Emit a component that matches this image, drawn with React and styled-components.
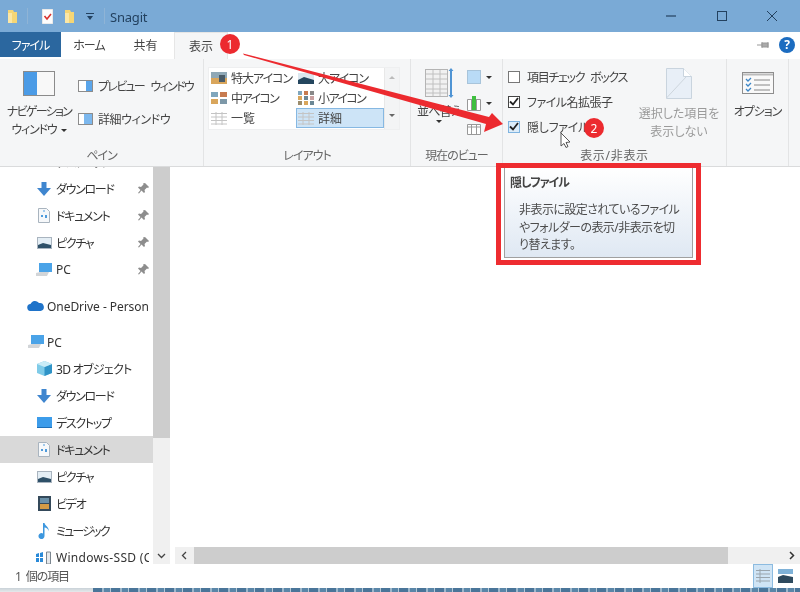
import React from "react";
import styled, { createGlobalStyle } from "styled-components";

const Global = createGlobalStyle`
  html, body { margin: 0; padding: 0; background: #fff; }
  body { font-family: "Noto Sans", "Noto Sans CJK JP", sans-serif; font-size: 12px; font-feature-settings: "palt"; color: #333; }
  * { box-sizing: border-box; }
`;

const Windowed = styled.div`
  position: relative; width: 800px; height: 592px; overflow: hidden;
  display: flex; flex-direction: column; background: #fff; filter: blur(0.3px);
`;
const Kana = styled.span`
  letter-spacing: ${p => p.$ls ?? -1}px;
  word-spacing: ${p => p.$ws || 0}px;
`;
const TitleBar = styled.header`
  height: 32px; flex: none; background: #7aaad6; display: flex; align-items: center; padding-left: 8px; color: #23415f;
`;
const QuickSep = styled.i`
  width: 1px; height: 16px; background: #8fb4d6; margin: 0 ${p => p.$r}px 0 ${p => p.$l}px;
`;
const QuickSpace = styled.i`
  width: ${p => p.$w}px; flex: none;
`;
const TitleText = styled.span`
  font-size: 13px; margin-right: auto; letter-spacing: -0.2px; padding-top: 1px;
`;
const WinButtons = styled.div`
  display: flex; width: 111px; justify-content: space-between; margin-right: 23px; align-items: center;
`;
const TabRow = styled.nav`
  height: 27px; flex: none; display: flex; align-items: stretch; background: #fff; color: #444; padding-bottom: 2px;
`;
const FileTab = styled.div`
  width: 61px; background: #2b679f; color: #fff; display: flex; align-items: center; justify-content: center;
`;
const Tab = styled.div`
  width: ${p => p.$w}px; display: flex; align-items: center; justify-content: center;
  ${p => p.$active && "background:#f5f6f7;border:1px solid #e6e6e6;border-bottom:0;margin-bottom:-2px;"}
`;
const TabTools = styled.div`
  margin-left: auto; display: flex; align-items: center; gap: 9px; padding-right: 5px;
`;
const Help = styled.span`
  width: 16px; height: 16px; border-radius: 50%; background: #1c6cc0; color: #fff; font-weight: 700; font-size: 12px;
  display: flex; align-items: center; justify-content: center;
`;
const Ribbon = styled.section`
  height: 108px; flex: none; display: flex; background: #f5f6f7; border-bottom: 1px solid #dadbdc; color: #444;
`;
const Group = styled.div`
  width: ${p => p.$w}px; flex: none; display: flex; flex-direction: column; border-right: 1px solid #e3e4e5;
`;
const GroupBody = styled.div`
  height: 86px; flex: none; display: flex;
`;
const GroupLabel = styled.div`
  height: 20px; text-align: center; line-height: 20px; color: #666; padding-top: 1px;
`;
const BigButton = styled.div`
  display: flex; flex-direction: column; align-items: center; line-height: 18px; text-align: center; white-space: nowrap;
  width: ${p => p.$w}px; flex: none;
  padding-top: ${p => p.$pt || 12}px;
`;
const BigCaption = styled.div`
  margin-top: ${p => p.$mt || 7}px;
  color: ${p => (p.$muted ? "#9a9a9a" : "inherit")};
`;
const CaptionLine = styled.div`
  display: flex; align-items: center; justify-content: center; gap: 4px;
`;
const PaneList = styled.div`
  display: flex; flex-direction: column; gap: 13px; padding-top: 17px;
`;
const PaneItem = styled.div`
  display: flex; align-items: center; gap: 5px; height: 20px; white-space: nowrap;
`;
const Gallery = styled.div`
  margin: 8px 0 0 4px; width: 192px; height: 63px; background: #fff; display: flex; border: 1px solid #eeeff0;
`;
const GalleryGrid = styled.div`
  width: 175px; display: grid; grid-template-columns: 87px 88px; grid-auto-rows: 20px;
`;
const GalleryItem = styled.div`
  display: flex; align-items: center; gap: 4px; padding-left: 2px; white-space: nowrap;
  ${p => p.$sel && "background:#cde4f7;outline:1px solid #86b8e2;outline-offset:-1px;"}
`;
const GalleryScroll = styled.div`
  width: 15px; margin-left: auto; background: #f3f4f5; border-left: 1px solid #e8e8e8;
  display: flex; flex-direction: column; align-items: center; justify-content: space-between; padding: 8px 0 12px; color: #aaa;
`;
const SortColumn = styled.div`
  width: 56px; display: flex; flex-direction: column; align-items: center; padding-top: 9px;
  line-height: 16px; white-space: nowrap; flex: none;
`;
const SmallColumn = styled.div`
  display: flex; flex-direction: column; gap: 6px; padding-top: 8px;
`;
const SmallTool = styled.div`
  display: flex; align-items: center; gap: 5px; height: 20px;
`;
const Caret = styled.i`
  width: 0; height: 0; border: 3px solid transparent; border-top: 3px solid ${p => p.$c || "#333"}; border-bottom: 0; display: block;
`;
const CheckColumn = styled.div`
  width: 132px; padding: 5px 0 0 5px; flex: none;
`;
const CheckRow = styled.label`
  display: flex; align-items: center; gap: 7px; height: 25px; white-space: nowrap;
`;
const Box = styled.span`
  width: 12px; height: 12px; flex: none; display: flex; align-items: center; justify-content: center;
  background: ${p => (p.$hover ? "#dcecf9" : "#fff")};
  border: 1px solid ${p => (p.$hover ? "#7fb4e0" : p.$on ? "#444" : "#777")};
`;
const Body = styled.main`
  height: 397px; flex: none; display: flex; overflow: hidden;
`;
const Nav = styled.div`
  width: 153px; flex: none; overflow: hidden;
`;
const NavList = styled.ul`
  list-style: none; margin: -19px 0 0; padding: 0;
`;
const NavRow = styled.li`
  height: 27px; display: flex; align-items: center; white-space: nowrap; overflow: hidden;
  color: #333; padding-right: 4px;
  padding-left: ${p => (p.$top ? 27 : 37)}px;
  margin-top: ${p => (p.$top ? 9 : 0)}px;
  background: ${p => (p.$sel ? "#d9d9d9" : "transparent")};
  gap: ${p => (p.$top ? 3 : 5)}px;
`;
const NavIcon = styled.span`
  width: ${p => (p.$top ? 17 : 14)}px; flex: none; display: flex; justify-content: center;
`;
const NavText = styled.span`
  flex: 1; overflow: hidden; letter-spacing: ${p => p.$ls ?? -1.3}px;
  ${p => p.$latin && "padding-top:1px;"}
`;
const VScroll = styled.div`
  width: 17px; flex: none; background: #f0f0f0; display: flex; flex-direction: column; height: 397px;
`;
const VThumb = styled.div`
  height: 271px; background: #cdcdcd;
`;
const ScrollBtn = styled.div`
  width: 17px; height: 17px; flex: none; display: flex; align-items: center; justify-content: center;
  margin-top: ${p => (p.$end ? "auto" : 0)};
`;
const Content = styled.div`
  flex: 1; display: flex; flex-direction: column; justify-content: flex-end; padding-left: 5px;
`;
const HScroll = styled.div`
  height: 17px; display: flex; background: #f0f0f0;
`;
const HThumb = styled.div`
  width: 534px; background: #cdcdcd; margin-left: 2px;
`;
const HEnd = styled.div`
  margin-left: auto;
`;
const StatusBar = styled.footer`
  height: 24px; flex: none; display: flex; align-items: center; padding: 0 7px 0 15px; color: #555;
`;
const ViewToggle = styled.div`
  margin-left: auto; display: flex; align-items: center; gap: 4px;
`;
const ViewBtn = styled.div`
  width: ${p => (p.$on ? 20 : 16)}px; height: 24px; display: flex; align-items: center; justify-content: center;
  ${p => p.$on && "background:#cfe4f5;border:1px solid #8cbbe0;"}
`;
const BottomEdge = styled.div`
  height: 4px; flex: none; display: flex;
`;
const EdgeLeft = styled.div`
  width: 93px; background: linear-gradient(#c9d2d8, #e6e9eb);
`;
const EdgeRight = styled.div`
  flex: 1; background: repeating-linear-gradient(90deg, #4a7599 0 9px, #9db7cb 9px 11px, #5a86a8 11px 17px, #b5c8d6 17px 18px);
`;
const Overlay = styled.svg`
  position: absolute; left: 0; top: 0; width: 800px; height: 592px; pointer-events: none;
`;
const Badge = styled.span`
  position: absolute; left: ${p => p.$x - 10}px; top: ${p => p.$y - 10}px; width: 20px; height: 20px; border-radius: 50%;
  background: #ec2a2f; color: #fff; font-size: 12px; display: flex; align-items: center; justify-content: center;
`;
const TipFrame = styled.aside`
  position: absolute; left: 496px; top: 163px; width: 205px; height: 102px; border: 5px solid #ee2c30;
  background: #fff; padding: 0 3px 0 3px;
`;
const TipPanel = styled.div`
  height: 90px; border: 1px solid #a0a0a0; border-top: 0;
  background: linear-gradient(#ffffff, #dfe8f3); color: #4c4c4c; padding: 5px 0 0 5px; white-space: nowrap;
`;
const TipTitle = styled.div`
  font-weight: 700; line-height: 20px; color: #444; letter-spacing: -1.1px;
`;
const TipText = styled.div`
  line-height: 17.5px; margin: 8px 0 0 9px; letter-spacing: -0.55px;
`;

const svg = (w, h, c) => <svg width={w} height={h} viewBox={`0 0 ${w} ${h}`} style={{ display: "block", flex: "none" }}>{c}</svg>;

const FolderQ = () => svg(10, 14, <><path d="M0 1h5l1 2h3v11H0z" fill="#f6d675" /><path d="M0 4h4v10H0z" fill="#fbe7a6" /></>);
const NoteQ = () => svg(11, 15, <><path d="M0 0h11v15H0z" fill="#fdfdfd" stroke="#d8d8d8" /><path d="M2.500 7l2.500 3 4-5" fill="none" stroke="#d9322f" strokeWidth="1.6" /></>);
const DropQ = () => svg(8, 7, <><path d="M0 0h8v1H0z" fill="#23415f" /><path d="M1 3h6L4 7z" fill="#23415f" /></>);
const MinI = () => svg(10, 10, <path d="M0 5h10" stroke="#23415f" strokeWidth="1.2" />);
const MaxI = () => svg(10, 10, <rect x=".5" y=".5" width="9" height="9" fill="none" stroke="#23415f" />);
const CloseI = () => svg(10, 10, <path d="M0 0l10 10M10 0L0 10" stroke="#23415f" />);
const PinH = () => svg(13, 8, <path d="M0 4h5M5 1v6M5 2h6v4H5zM11 1v6" stroke="#999" fill="#aaa" />);
const NavPane = () => svg(32, 25, <><rect x=".5" y=".5" width="31" height="24" fill="#f8f8f8" stroke="#8b8b8b" /><rect x="1" y="1" width="13" height="23" fill="#4b9be6" /></>);
const PaneIcon = ({ right }) => svg(15, 12, <><rect x=".5" y=".5" width="14" height="11" fill="#fff" stroke="#8c8c8c" />{right ? <rect x="8" y="1" width="6" height="10" fill="#5aa5ea" /> : <rect x="6" y="1" width="8" height="10" fill="#7cb8ee" />}</>);
const Thumb = ({ kind }) => {
  if (kind === "xl") return svg(16, 12, <><rect width="16" height="12" fill="#8fa8b6" /><path d="M0 6h16v6H0z" fill="#d9a65c" /><path d="M8 3h6v7H8z" fill="#4a5c68" /></>);
  if (kind === "l") return svg(16, 11, <><rect width="16" height="11" fill="#dbe7ef" /><path d="M0 7l6-3 10 3v4H0z" fill="#24465e" /></>);
  if (kind === "m") return svg(16, 12, <><rect width="7" height="5" fill="#7fa6bd" /><rect x="9" width="7" height="5" fill="#c77b50" /><rect y="7" width="7" height="5" fill="#d9a65c" /><rect x="9" y="7" width="7" height="5" fill="#7d98a8" /></>);
  if (kind === "s") return svg(16, 14, <><rect width="4" height="4" fill="#7fa6bd" /><rect x="6" width="4" height="4" fill="#c77b50" /><rect x="12" width="4" height="4" fill="#888" /><rect y="5" width="4" height="4" fill="#d9a65c" /><rect x="6" y="5" width="4" height="4" fill="#6b8795" /><rect x="12" y="5" width="4" height="4" fill="#c9a0a0" /><rect y="10" width="4" height="4" fill="#9b8c6c" /><rect x="6" y="10" width="4" height="4" fill="#d9a65c" /><rect x="12" y="10" width="4" height="4" fill="#6b8795" /></>);
  return svg(16, 13, <path d="M0 1.500h16M0 5h16M0 8.500h16M0 12h16M5 0v13M11 0v13" stroke="#c4c4c4" fill="none" />);
};
const SortBig = () => svg(29, 30, <>
  <rect x=".5" y="1.500" width="22" height="27" fill="#f1f1f1" stroke="#b4b4b4" />
  <path d="M1 6h21M1 11h21M1 16h21M1 21h21M1 25h21M8 2v26M15 2v26" stroke="#c0c0c0" />
  <path d="M26 0l2.500 3h-1.500v24h1.500L26 30l-2.500-3H25V3h-1.500z" fill="#4f94d4" />
</>);
const Preview = () => svg(14, 14, <><rect x=".5" y=".5" width="13" height="13" fill="#b9dbf6" stroke="#a8c4da" /></>);
const Cols = () => svg(14, 15, <><path d="M.5 3.500h13v11H.5z" fill="#fff" stroke="#999" /><path d="M4.500 4v10M9.500 4v10" stroke="#999" /><rect x="5" y="0" width="4" height="14" fill="#3fbf3f" /></>);
const ColsPlain = () => svg(14, 11, <><path d="M.5 .5h13v10H.5z" fill="#fff" stroke="#999" /><path d="M4.500 1v9M9.500 1v9M1 3h12" stroke="#999" /></>);
const Check = () => svg(10, 9, <path d="M1 4.500l3 3L9 1" fill="none" stroke="#222" strokeWidth="1.800" />);
const HideDoc = () => svg(26, 31, <><path d="M.5 .5h17l8 8v22H.5z" fill="#e8eff7" stroke="#c9d4de" /><path d="M17.500 .5v8h8" fill="#fff" stroke="#c9d4de" /><path d="M.5 30L20 9" stroke="#cdd5dc" /></>);
const OptionsI = () => svg(32, 22, <>
  <rect x=".5" y=".5" width="31" height="21" fill="#f9f9f9" stroke="#8e8e8e" /><path d="M1 2.500h30" stroke="#bbb" strokeWidth="2" />
  <path d="M4 7l2 2 3-3M4 12l2 2 3-3M4 17l2 2 3-3" fill="none" stroke="#3d86c6" strokeWidth="1.300" />
  <path d="M12 8h16M12 13h16M12 18h16" stroke="#888" />
</>);
const Down = () => svg(14, 14, <path d="M4.500 0h5v6H14l-7 8-7-8h4.500z" fill="#3f86cf" />);
const Doc = () => svg(12, 15, <><path d="M.5 .5h8l3 3v11H.5z" fill="#f6f8fa" stroke="#a9b4bf" /><path d="M3 7h2v2H3zM7 7h2v3H7z" fill="#4f9bdc" /><path d="M5 3h2" stroke="#4f9bdc" /></>);
const Pic = () => svg(15, 12, <><rect x=".5" y=".5" width="14" height="11" fill="#e4eef5" stroke="#a9b4bf" /><path d="M1 8l5-2 8 2v3H1z" fill="#2e5068" /></>);
const PC = () => svg(16, 14, <><path d="M3 0h13v9H3z" fill="#4aa3e8" /><path d="M0 10l4-1h9l-2 4H0z" fill="#d2d5d8" /></>);
const Cloud = () => svg(17, 11, <path d="M4 11a3.500 3.500 0 0 1-.5-7A5 5 0 0 1 12 3a4 4 0 0 1 1.500 8z" fill="#1f73c9" />);
const Cube = () => svg(15, 15, <><path d="M7.500 0L15 3v9l-7.500 3L0 12V3z" fill="#7fcbe8" /><path d="M7.500 6L15 3v9l-7.500 3z" fill="#2f93c7" /><path d="M7.500 6L0 3l7.500-3L15 3z" fill="#c9ecf7" /></>);
const Desk = () => svg(15, 11, <><rect width="15" height="10" fill="#3c9cea" /><rect y="10" width="15" height="1" fill="#1d6fb8" /></>);
const Video = () => svg(13, 15, <><rect width="13" height="15" fill="#34495a" /><rect x="2" y="2" width="9" height="5" fill="#6a90a8" /><rect x="2" y="8" width="9" height="5" fill="#d49b45" /></>);
const Note = () => svg(12, 16, <path d="M5 0h1.500c.5 3 5 4 4 8-.5-2-2-3.500-4-3.500V13a3 3 0 1 1-1.500-2.500z" fill="#3d97de" />);
const Disk = () => svg(17, 14, <><path d="M0 3l3-1v4H0zM4 2l3-1v5H4zM0 7h3v4H0zM4 7h3v4H4z" fill="#2a8ad8" /><path d="M10.500 1h4v12h-4z" fill="#e6e9ec" stroke="#7c8790" /></>);
const Pin = () => svg(11, 11, <path d="M7 0l4 4-1 1-1-.500L6.500 7l.5 2-1 1-2.500-2.500L1 10.500 0 10l2.500-3L0 4.500l1-1 2 .5L5.500 1.500 5 .5z" fill="#8d8d8d" />);
const ChevD = () => svg(9, 6, <path d="M1 1l3.500 3.500L8 1" fill="none" stroke="#444" strokeWidth="1.300" />);
const ChevL = () => svg(6, 9, <path d="M5 1L1.500 4.500 5 8" fill="none" stroke="#444" strokeWidth="1.300" />);
const ChevR = () => svg(6, 9, <path d="M1 1l3.500 3.500L1 8" fill="none" stroke="#333" strokeWidth="1.500" />);
const DetailsV = () => svg(14, 14, <path d="M0 1.500h14M0 5h14M0 8.500h14M0 12h14M4 0v14" stroke="#9aa5ad" fill="none" />);
const LargeV = () => svg(15, 14, <><rect width="15" height="5" fill="#7fb2d8" /><path d="M0 8l5-2 10 2v6H0z" fill="#2e4a5e" /></>);

const navRows = [
  [<Desk />, "デスクトップ"],
  [<Down />, "ダウンロード"],
  [<Doc />, "ドキュメント"],
  [<Pic />, "ピクチャ"],
  [<PC />, "PC", 0],
];
const navRows2 = [
  [<Cube />, "3D オブジェクト", -0.7],
  [<Down />, "ダウンロード"],
  [<Desk />, "デスクトップ"],
  [<Doc />, "ドキュメント", -1.3, true],
  [<Pic />, "ピクチャ"],
  [<Video />, "ビデオ"],
  [<Note />, "ミュージック", -1.8],
  [<Disk />, "Windows-SSD (C:)", 0.3],
];

export default function App() {
  return (
    <Windowed>
      <Global />
      <TitleBar>
        <FolderQ />
        <QuickSep $l={9} $r={14} />
        <NoteQ />
        <QuickSpace $w={12} />
        <FolderQ />
        <QuickSpace $w={11} />
        <DropQ />
        <QuickSep $l={10} $r={5} />
        <TitleText>Snagit</TitleText>
        <WinButtons><MinI /><MaxI /><CloseI /></WinButtons>
      </TitleBar>
      <TabRow>
        <FileTab><Kana>ファイル</Kana></FileTab>
        <Tab $w={56}><Kana>ホーム</Kana></Tab>
        <Tab $w={57}>共有</Tab>
        <Tab $w={54} $active>表示</Tab>
        <TabTools><PinH /><Help>?</Help></TabTools>
      </TabRow>
      <Ribbon>
        <Group $w={204}>
          <GroupBody>
            <BigButton $w={78}>
              <NavPane />
              <BigCaption>
                <Kana $ls={-1.7}>ナビゲーション</Kana>
                <CaptionLine><Kana $ls={-1.2}>ウィンドウ</Kana><Caret /></CaptionLine>
              </BigCaption>
            </BigButton>
            <PaneList>
              <PaneItem><PaneIcon right /><Kana $ls={-1.7} $ws={5}>プレビュー ウィンドウ</Kana></PaneItem>
              <PaneItem><PaneIcon /><Kana $ls={-0.4}>詳細ウィンドウ</Kana></PaneItem>
            </PaneList>
          </GroupBody>
          <GroupLabel><Kana>ペイン</Kana></GroupLabel>
        </Group>
        <Group $w={207}>
          <GroupBody>
            <Gallery>
              <GalleryGrid>
                <GalleryItem><Thumb kind="xl" /><Kana>特大アイコン</Kana></GalleryItem>
                <GalleryItem><Thumb kind="l" /><Kana>大アイコン</Kana></GalleryItem>
                <GalleryItem><Thumb kind="m" /><Kana $ls={-1.6}>中アイコン</Kana></GalleryItem>
                <GalleryItem><Thumb kind="s" /><Kana $ls={-1.6}>小アイコン</Kana></GalleryItem>
                <GalleryItem><Thumb kind="list" />一覧</GalleryItem>
                <GalleryItem $sel><Thumb kind="d" />詳細</GalleryItem>
              </GalleryGrid>
              <GalleryScroll><Caret $c="#bbb" style={{ transform: "scaleY(-1)" }} /><Caret $c="#666" /></GalleryScroll>
            </Gallery>
          </GroupBody>
          <GroupLabel><Kana>レイアウト</Kana></GroupLabel>
        </Group>
        <Group $w={92}>
          <GroupBody>
            <SortColumn>
              <SortBig />
              <BigCaption $mt={6}><Kana $ls={-0.8}>並べ替え</Kana></BigCaption>
              <Caret />
            </SortColumn>
            <SmallColumn>
              <SmallTool><Preview /><Caret /></SmallTool>
              <SmallTool><Cols /><Caret /></SmallTool>
              <SmallTool><ColsPlain /></SmallTool>
            </SmallColumn>
          </GroupBody>
          <GroupLabel><Kana>現在のビュー</Kana></GroupLabel>
        </Group>
        <Group $w={224}>
          <GroupBody>
            <CheckColumn>
              <CheckRow><Box /><Kana $ls={-1.3} $ws={4}>項目チェック ボックス</Kana></CheckRow>
              <CheckRow><Box $on><Check /></Box><Kana $ls={-0.5}>ファイル名拡張子</Kana></CheckRow>
              <CheckRow><Box $on $hover><Check /></Box><Kana $ls={-0.3}>隠しファイル</Kana></CheckRow>
            </CheckColumn>
            <BigButton $w={88} $pt={9}>
              <HideDoc />
              <BigCaption $mt={6} $muted>選択した項目を<br />表示しない</BigCaption>
            </BigButton>
          </GroupBody>
          <GroupLabel><Kana $ls={0.7}>表示/非表示</Kana></GroupLabel>
        </Group>
        <Group $w={62}>
          <GroupBody>
            <BigButton $w={61} $pt={13}>
              <OptionsI />
              <BigCaption $mt={9}><Kana>オプション</Kana></BigCaption>
            </BigButton>
          </GroupBody>
          <GroupLabel />
        </Group>
      </Ribbon>
      <Body>
        <Nav>
          <NavList>
            {navRows.map(([icon, text, ls], i) => (
              <NavRow key={i}>
                <NavIcon>{icon}</NavIcon>
                <NavText $ls={ls}>{text}</NavText>
                <Pin />
              </NavRow>
            ))}
            <NavRow $top>
              <NavIcon $top><Cloud /></NavIcon>
              <NavText $ls={-0.05} $latin>OneDrive - Personal</NavText>
            </NavRow>
            <NavRow $top>
              <NavIcon $top><PC /></NavIcon>
              <NavText $ls={0} $latin>PC</NavText>
            </NavRow>
            {navRows2.map(([icon, text, ls, sel], i) => (
              <NavRow key={i} $sel={sel}>
                <NavIcon>{icon}</NavIcon>
                <NavText $ls={ls}>{text}</NavText>
              </NavRow>
            ))}
          </NavList>
        </Nav>
        <VScroll>
          <VThumb />
          <ScrollBtn $end><ChevD /></ScrollBtn>
        </VScroll>
        <Content>
          <HScroll>
            <ScrollBtn><ChevL /></ScrollBtn>
            <HThumb />
            <HEnd><ScrollBtn><ChevR /></ScrollBtn></HEnd>
          </HScroll>
        </Content>
      </Body>
      <StatusBar>
        <Kana $ls={-1.1} $ws={3}>1 個の項目</Kana>
        <ViewToggle>
          <ViewBtn $on><DetailsV /></ViewBtn>
          <ViewBtn><LargeV /></ViewBtn>
        </ViewToggle>
      </StatusBar>
      <BottomEdge><EdgeLeft /><EdgeRight /></BottomEdge>

      <Overlay viewBox="0 0 800 592">
        <path d="M243 53.500L244 55 486 124 484 132 503 124 492 113 489 117z" fill="#ec2a2f" />
        <path d="M561 133v13l3-2.500 2 4 2-1-2-4 4-.5z" fill="#fff" stroke="#444" strokeWidth=".9" />
      </Overlay>
      <Badge $x={230} $y={44}>1</Badge>
      <Badge $x={594} $y={128}>2</Badge>
      <TipFrame>
        <TipPanel>
          <TipTitle>隠しファイル</TipTitle>
          <TipText>
            非表示に設定されているファイル<br />
            やフォルダーの表示/非表示を切<br />
            り替えます。
          </TipText>
        </TipPanel>
      </TipFrame>
    </Windowed>
  );
}
